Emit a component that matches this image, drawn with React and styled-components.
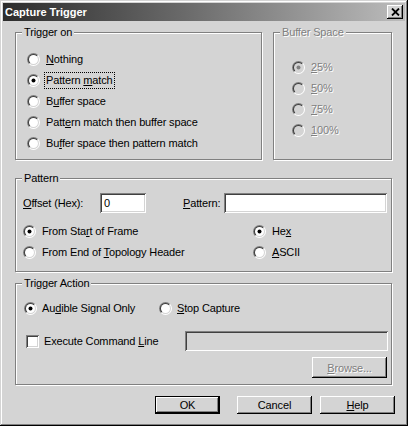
import React from "react";
import styled, { createGlobalStyle } from "styled-components";

const face = "#d4d4d4";

const GlobalStyle = createGlobalStyle`
  html, body {
    margin: 0;
    padding: 0;
    background: ${face};
  }
  body {
    font-family: "Liberation Sans", Arial, sans-serif;
    font-size: 11px;
    letter-spacing: -0.15px;
    color: #000;
  }
`;

const Window = styled.div`
  width: 408px;
  height: 426px;
  box-sizing: border-box;
  padding: 3px;
  background: ${face};
  box-shadow: inset -1px -1px #000, inset 1px 1px ${face}, inset -2px -2px #808080,
    inset 2px 2px #fff;
  display: flex;
  flex-direction: column;
`;

const TitleBar = styled.div`
  height: 18px;
  display: flex;
  align-items: center;
  justify-content: space-between;
  background: linear-gradient(to right, #2c2c2c 0%, #6a6a6a 45%, #bcbcbc 100%);
  color: #fff;
  font-weight: bold;
  letter-spacing: 0;
  padding-left: 2px;
`;

const CloseBox = styled.div`
  width: 16px;
  height: 14px;
  margin-right: 2px;
  background: ${face};
  box-shadow: inset -1px -1px #000, inset 1px 1px #fff, inset -2px -2px #808080;
  display: flex;
  align-items: center;
  justify-content: center;
`;

const Content = styled.div`
  display: flex;
  flex-direction: column;
  padding: 11px 13px 0 12px;
`;

const TopRow = styled.div`
  display: flex;
  gap: 11px;
`;

const Group = styled.div`
  position: relative;
  box-sizing: border-box;
  width: ${(p) => (p.$width ? `${p.$width}px` : "auto")};
  flex: ${(p) => (p.$grow ? "1" : "none")};
  height: ${(p) => p.$height}px;
  margin-top: ${(p) => p.$top || 0}px;
  border: 1px solid #808080;
  box-shadow: inset 1px 1px #fff, 1px 1px #fff;
  padding: ${(p) => p.$pad};
  display: flex;
  flex-direction: column;
`;

const Legend = styled.span`
  position: absolute;
  top: -7px;
  left: 6px;
  padding: 0 2px;
  line-height: 13px;
  background: ${face};
  color: ${(p) => (p.$disabled ? "#808080" : "#000")};
  text-shadow: ${(p) => (p.$disabled ? "1px 1px #fff" : "none")};
`;

const Row = styled.div`
  display: flex;
  align-items: center;
  height: ${(p) => p.$h || 21}px;
  margin-top: ${(p) => p.$top || 0}px;
`;

const RadioItem = styled.div`
  display: flex;
  align-items: center;
  gap: ${(p) => p.$gap ?? 6}px;
  height: 21px;
  width: ${(p) => (p.$w ? `${p.$w}px` : "auto")};
  flex: none;
`;

const Text = styled.span`
  line-height: 13px;
  white-space: nowrap;
  color: ${(p) => (p.$disabled ? "#808080" : "#000")};
  text-shadow: ${(p) => (p.$disabled ? "1px 1px #fff" : "none")};
  outline: ${(p) => (p.$focus ? "1px dotted #000" : "none")};
  outline-offset: 1px;
`;

const Label = styled.span`
  width: ${(p) => p.$w}px;
  margin-left: ${(p) => p.$ml || 0}px;
  flex: none;
  white-space: nowrap;
`;

const Field = styled.div`
  box-sizing: border-box;
  height: ${(p) => p.$h || 20}px;
  width: ${(p) => (p.$w ? `${p.$w}px` : "auto")};
  flex: ${(p) => (p.$w ? "none" : "1")};
  margin-left: ${(p) => p.$ml || 0}px;
  background: ${(p) => (p.$disabled ? face : "#fff")};
  box-shadow: inset 1px 1px #808080, inset -1px -1px #fff, inset 2px 2px #404040,
    inset -2px -2px ${face};
  padding: 0 4px;
  display: flex;
  align-items: center;
`;

const CheckBox = styled.div`
  width: 13px;
  height: 13px;
  flex: none;
  margin-left: 2px;
  background: #fff;
  box-shadow: inset 1px 1px #808080, inset -1px -1px #fff, inset 2px 2px #404040,
    inset -2px -2px ${face};
`;

const RadioGrid = styled.div`
  display: grid;
  grid-template-columns: 230px 1fr;
  margin-top: ${(p) => p.$top || 0}px;
`;

const Button = styled.div`
  box-sizing: border-box;
  width: ${(p) => p.$w}px;
  height: ${(p) => p.$h || 18}px;
  margin-left: ${(p) => p.$ml || 0}px;
  flex: none;
  display: flex;
  align-items: center;
  justify-content: center;
  background: ${face};
  border: ${(p) => (p.$default ? "1px solid #000" : "none")};
  box-shadow: inset -1px -1px #000, inset 1px 1px #fff, inset -2px -2px #808080;
  color: ${(p) => (p.$disabled ? "#808080" : "#000")};
  text-shadow: ${(p) => (p.$disabled ? "1px 1px #fff" : "none")};
`;

const BrowseRow = styled.div`
  display: flex;
  justify-content: flex-end;
  margin-top: 6px;
  padding-right: 1px;
`;

const ButtonRow = styled.div`
  display: flex;
  justify-content: flex-end;
  margin-top: 11px;
  margin-right: -3px;
`;

const half = (r) => {
  const c = 6.5;
  const d = r * Math.SQRT1_2;
  return {
    tl: `M${c + d},${c - d} A${r},${r} 0 0 0 ${c - d},${c + d} Z`,
    br: `M${c + d},${c - d} A${r},${r} 0 0 1 ${c - d},${c + d} Z`,
  };
};
const outer = half(6.5);
const inner = half(5.5);

const RadioIcon = ({ checked, disabled }) => (
  <svg width="13" height="13" viewBox="0 0 13 13" style={{ flex: "none" }}>
    <path d={outer.tl} fill="#808080" />
    <path d={outer.br} fill="#fff" />
    <path d={inner.tl} fill="#404040" />
    <path d={inner.br} fill={face} />
    <circle cx="6.5" cy="6.5" r="4.5" fill={disabled ? face : "#fff"} />
    {checked && <circle cx="6.5" cy="6.5" r="2" fill={disabled ? "#808080" : "#000"} />}
  </svg>
);

const Radio = ({ checked, disabled, focus, w, gap, children }) => (
  <RadioItem $w={w} $gap={gap}>
    <RadioIcon checked={checked} disabled={disabled} />
    <Text $disabled={disabled} $focus={focus}>
      {children}
    </Text>
  </RadioItem>
);

export default function App() {
  return (
    <>
      <GlobalStyle />
      <Window>
        <TitleBar>
          <span>Capture Trigger</span>
          <CloseBox>
            <svg width="9" height="8" viewBox="0 0 9 8">
              <path d="M1 0.5 L8 7.5 M8 0.5 L1 7.5" stroke="#000" strokeWidth="1.8" />
            </svg>
          </CloseBox>
        </TitleBar>
        <Content>
          <TopRow>
            <Group $width={247} $height={128} $pad="16px 0 0 11px">
              <Legend>Trigger on</Legend>
              <Radio>
                <u>N</u>othing
              </Radio>
              <Radio checked focus>
                Pattern <u>m</u>atch
              </Radio>
              <Radio>
                B<u>u</u>ffer space
              </Radio>
              <Radio>
                Patt<u>e</u>rn match then buffer space
              </Radio>
              <Radio>
                Bu<u>f</u>fer space then pattern match
              </Radio>
            </Group>
            <Group $grow $height={128} $pad="24px 0 0 18px">
              <Legend $disabled>Buffer Space</Legend>
              <Radio checked disabled>
                <u>2</u>5%
              </Radio>
              <Radio disabled>
                <u>5</u>0%
              </Radio>
              <Radio disabled>
                <u>7</u>5%
              </Radio>
              <Radio disabled>
                <u>1</u>00%
              </Radio>
            </Group>
          </TopRow>

          <Group $height={94} $top={18} $pad="14px 4px 0 7px">
            <Legend>Pattern</Legend>
            <Row $h={20}>
              <Label $w={77}>
                <u>O</u>ffset (Hex):
              </Label>
              <Field $w={46}>0</Field>
              <Label $w={41} $ml={37}>
                <u>P</u>attern:
              </Label>
              <Field />
            </Row>
            <RadioGrid $top={8}>
              <Radio checked>
                From Sta<u>r</u>t of Frame
              </Radio>
              <Radio checked>
                He<u>x</u>
              </Radio>
              <Radio>
                From End of <u>T</u>opology Header
              </Radio>
              <Radio>
                <u>A</u>SCII
              </Radio>
            </RadioGrid>
          </Group>

          <Group $height={102} $top={11} $pad="14px 3px 0 8px">
            <Legend>Trigger Action</Legend>
            <Row>
              <Radio checked w={135} gap={5}>
                Au<u>d</u>ible Signal Only
              </Radio>
              <Radio gap={5}>
                <u>S</u>top Capture
              </Radio>
            </Row>
            <Row $h={20} $top={12}>
              <CheckBox />
              <Label $w={141} $ml={5}>
                Execute Command <u>L</u>ine
              </Label>
              <Field $disabled />
            </Row>
            <BrowseRow>
              <Button $w={75} $h={21} $disabled>
                <span>
                  <u>B</u>rowse...
                </span>
              </Button>
            </BrowseRow>
          </Group>

          <ButtonRow>
            <Button $w={65} $default>
              OK
            </Button>
            <Button $w={75} $ml={17}>
              Cancel
            </Button>
            <Button $w={75} $ml={8}>
              <span>
                <u>H</u>elp
              </span>
            </Button>
          </ButtonRow>
        </Content>
      </Window>
    </>
  );
}
